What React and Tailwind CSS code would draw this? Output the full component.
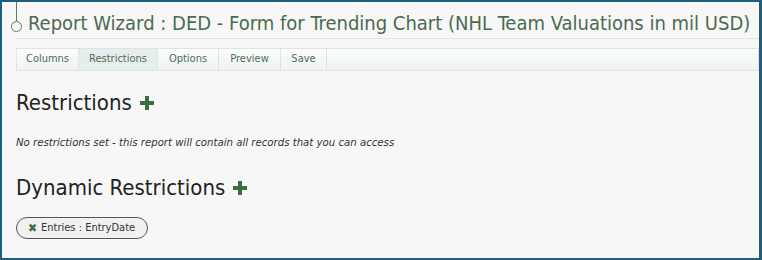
const tabs = [
    { label: 'Columns', width: 'w-[62px]' },
    { label: 'Restrictions', width: 'w-[79px]' },
    { label: 'Options', width: 'w-[61px]' },
    { label: 'Preview', width: 'w-[62px]' },
    { label: 'Save', width: 'w-[46px]' },
];

function Plus() {
    return (
        <svg width="14" height="14" viewBox="0 0 14 14" className="inline-block">
            <path d="M5 0h4v5h5v4H9v5H5V9H0V5h5z" fill="#3c6e42" />
        </svg>
    );
}

export default function App() {
    return (
        <div
            className="w-[762px] h-[260px] bg-[#f7f7f7] border-2 border-r-[3px] border-[#1e5f80] overflow-hidden text-[#222]"
            style={{ fontFamily: '"DejaVu Sans Condensed", "DejaVu Sans", sans-serif' }}
        >
            {/* Title */}
            <div className="flex items-end h-[36px] ml-[9px]">
                <div className="flex flex-col items-center w-[11px] h-full">
                    <div className="w-px h-[19px] bg-[#5a7d5a]" />
                    <div className="w-[11px] h-[11px] rounded-full border-[1.5px] border-[#5a7d5a]" />
                </div>
                <h1 className="text-[20px] leading-none text-[#4b6b4e] ml-[6px] pb-[5px] whitespace-nowrap">
                    Report Wizard : DED - Form for Trending Chart (NHL Team Valuations in mil USD)
                </h1>
            </div>
            <div className="ml-[13px] h-px bg-[#e2e2e2]" />

            {/* Tabs */}
            <div className="mt-[9px] ml-[14px] h-[23px] flex border border-[#dfe3e3] bg-gradient-to-b from-[#fbfcfc] to-[#eef3f3] text-[11px] text-[#4c6e4f]">
                {tabs.map((tab) => (
                    <div
                        key={tab.label}
                        className={`${tab.width} flex items-center justify-center border-r border-[#dde2e2] ${
                            tab.label === 'Restrictions' ? 'bg-[#e6eded]' : ''
                        }`}
                    >
                        {tab.label}
                    </div>
                ))}
            </div>

            {/* Restrictions */}
            <div className="px-[14px]">
                <h2 className="mt-[21px] text-[22px] leading-none flex items-center gap-[8px]">
                    Restrictions <Plus />
                </h2>
                <p className="mt-[21px] text-[11.3px] italic text-[#333]">
                    No restrictions set - this report will contain all records that you can access
                </p>

                <h2 className="mt-[25px] text-[22px] leading-none flex items-center gap-[8px]">
                    Dynamic Restrictions <Plus />
                </h2>
                <div className="mt-[18px] inline-flex items-center gap-[4px] h-[22px] pl-[11px] pr-[12px] rounded-full border border-[#555] bg-[#f1f1f1] text-[11px] text-[#333]">
                    <span className="text-[#3c6e42] text-[12px] font-bold leading-none">✖</span>
                    Entries : EntryDate
                </div>
            </div>
        </div>
    );
}
